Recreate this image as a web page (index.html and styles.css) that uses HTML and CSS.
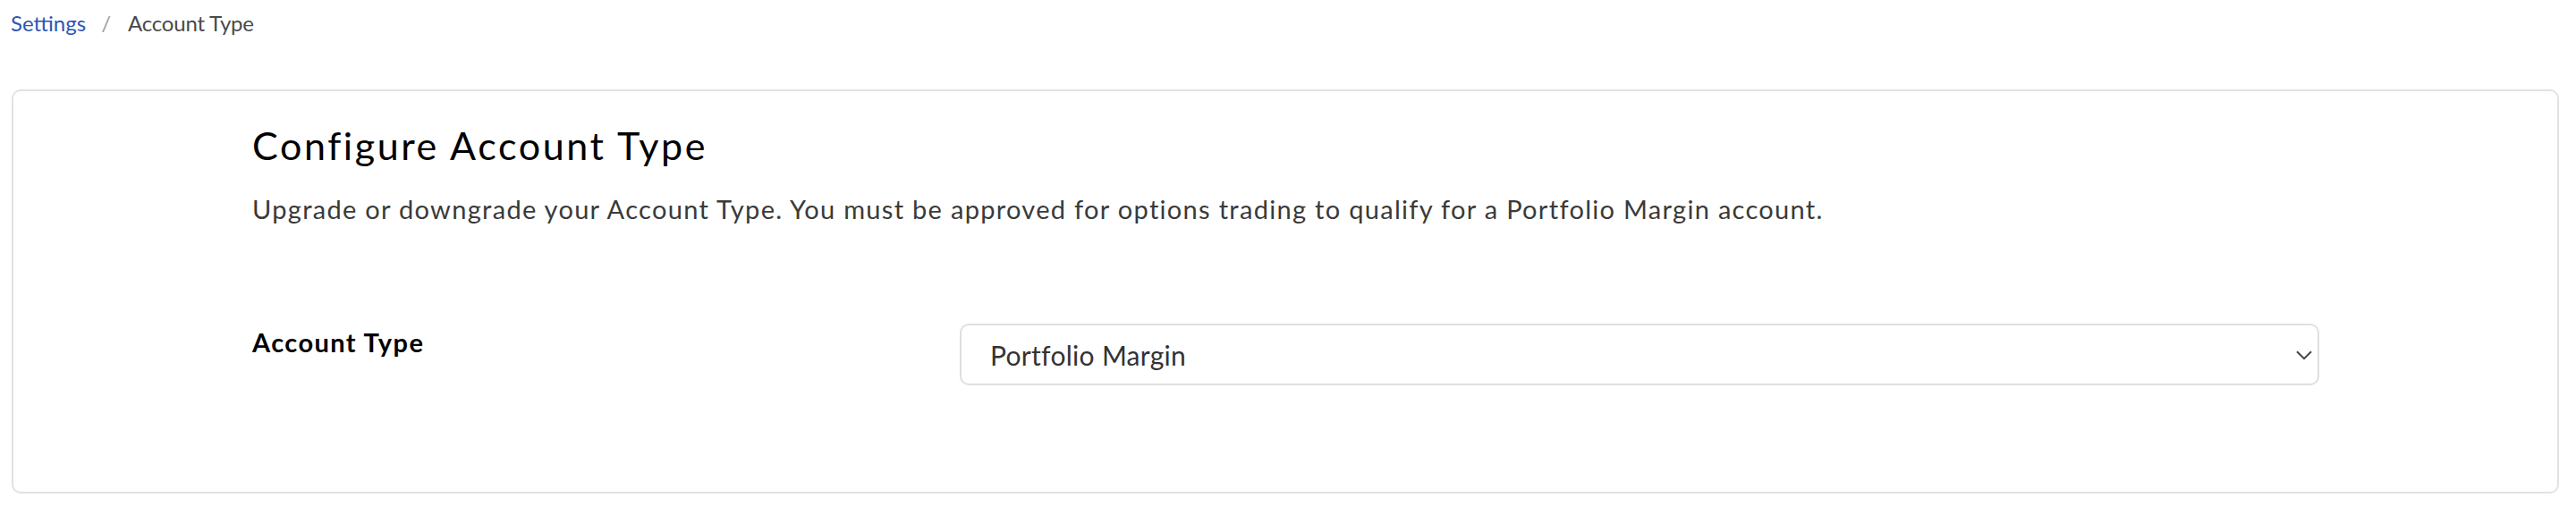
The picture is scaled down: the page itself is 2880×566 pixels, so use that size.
FILE: index.html
```html
<!DOCTYPE html>
<html lang="en">
<head>
<meta charset="utf-8">
<title>Account Type</title>
<link rel="stylesheet" href="styles.css">
</head>
<body>
<div class="page">
  <nav class="breadcrumb">
    <a class="crumb-link" href="#">Settings</a>
    <span class="crumb-sep">/</span>
    <span class="crumb-current">Account Type</span>
  </nav>
  <section class="card">
    <div class="card-inner">
      <h1 class="title">Configure Account Type</h1>
      <p class="desc">Upgrade or downgrade your Account Type. You must be approved for options trading to qualify for a Portfolio Margin account.</p>
      <div class="form-row">
        <label class="field-label" for="acct">Account Type</label>
        <div class="select-wrap">
          <select id="acct" class="select">
            <option>Portfolio Margin</option>
            <option>Margin</option>
            <option>Cash</option>
          </select>
          <svg class="chevron" width="18" height="11" viewBox="0 0 18 11" aria-hidden="true"><path d="M1 1.2 L9 9.2 L17 1.2" fill="none" stroke="#444" stroke-width="2"/></svg>
        </div>
      </div>
    </div>
  </section>
</div>
</body>
</html>
```
FILE: styles.css
```css
* { box-sizing: border-box; }
html, body { margin: 0; padding: 0; background: #fff; }
body { font-family: Lato, "Open Sans", Arial, sans-serif; color: #000; }

.page { padding: 0 19px 0 12px; }

.breadcrumb {
  padding-top: 8px;
  font-size: 24px;
  line-height: 36px;
  display: flex;
  align-items: baseline;
}
.crumb-link { color: #2e56b6; text-decoration: none; }
.crumb-sep { color: #a0a0a0; margin: 0 19px 0 17px; }
.crumb-current { color: #4a4a4a; letter-spacing: -0.2px; }

.card {
  margin-top: 56px;
  margin-left: 1px;
  border: 2px solid #e2e2e2;
  border-radius: 10px;
  height: 452px;
}
.card-inner { padding: 35px 266px 0 267px; }

.title {
  margin: 0;
  font-size: 43px;
  line-height: 1.2;
  font-weight: 400;
  letter-spacing: 2.6px;
  color: #000;
}
.desc {
  margin: 23px 0 0;
  font-size: 29px;
  line-height: 1.5;
  letter-spacing: 1.3px;
  color: #3a3a3a;
}

.form-row {
  margin-top: 107px;
  display: grid;
  grid-template-columns: 791px 1fr;
  align-items: start;
}
.field-label {
  font-size: 29px;
  line-height: 1.5;
  font-weight: 700;
  letter-spacing: 1.4px;
  color: #000;
  margin-top: -1px;
}
.select-wrap { position: relative; }
.select {
  display: block;
  width: 100%;
  height: 69px;
  appearance: none;
  -webkit-appearance: none;
  border: 2px solid #dfdfdf;
  border-radius: 10px;
  background: #fff;
  padding: 0 40px 0 32px;
  font-family: Lato, "Open Sans", Arial, sans-serif;
  font-size: 30px;
  letter-spacing: 0.3px;
  color: #333;
}
.chevron {
  position: absolute;
  right: 8px;
  top: 30px;
  pointer-events: none;
}
```
